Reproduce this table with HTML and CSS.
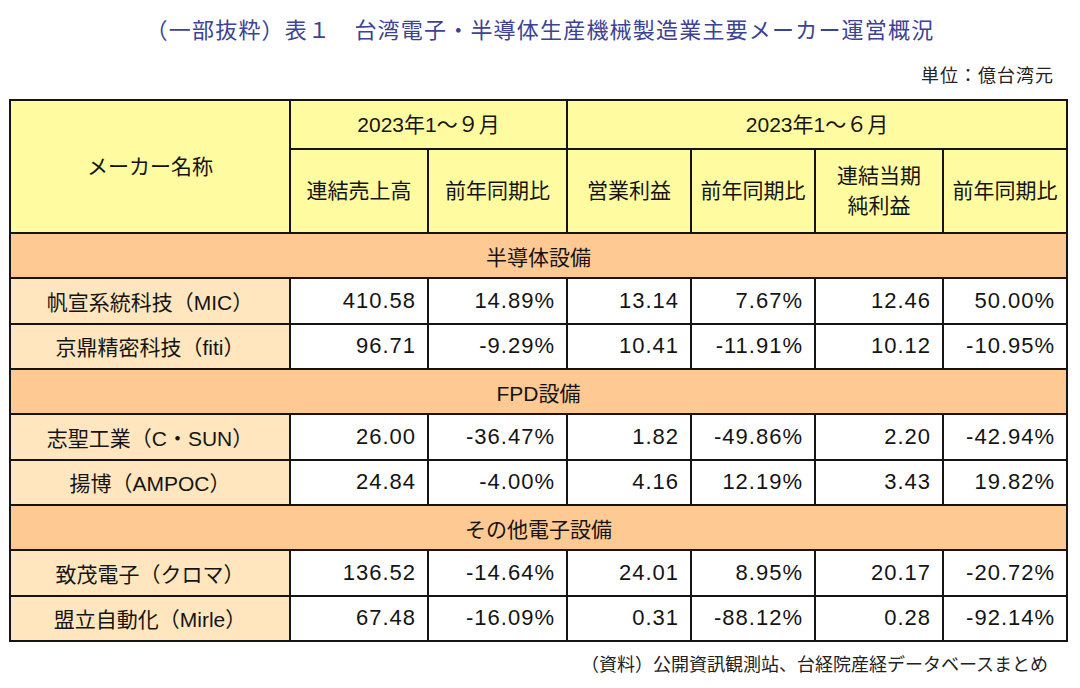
FILE: index.html
```html
<!DOCTYPE html>
<html lang="ja">
<head>
<meta charset="utf-8">
<title>台湾電子・半導体生産機械製造業主要メーカー運営概況</title>
<link rel="stylesheet" href="styles.css">
</head>
<body>
<div class="page">
  <h1 class="title">（一部抜粋）表１　台湾電子・半導体生産機械製造業主要メーカー運営概況</h1>
  <p class="unit">単位：億台湾元</p>
  <table class="report">
    <colgroup>
      <col class="c-name"><col class="c-sales"><col class="c-yoy"><col class="c-op"><col class="c-yoy2"><col class="c-net"><col class="c-yoy3">
    </colgroup>
    <thead>
      <tr class="h-top">
        <th rowspan="2">メーカー名称</th>
        <th colspan="2">2023年1〜９月</th>
        <th colspan="4">2023年1〜６月</th>
      </tr>
      <tr class="h-sub">
        <th>連結売上高</th><th>前年同期比</th><th>営業利益</th><th>前年同期比</th><th>連結当期<br>純利益</th><th>前年同期比</th>
      </tr>
    </thead>
    <tbody>
      <tr class="sec"><td colspan="7">半導体設備</td></tr>
      <tr class="row"><td class="name">帆宣系統科技（MIC）</td><td class="num">410.58</td><td class="num">14.89%</td><td class="num">13.14</td><td class="num">7.67%</td><td class="num">12.46</td><td class="num">50.00%</td></tr>
      <tr class="row"><td class="name">京鼎精密科技（fiti）</td><td class="num">96.71</td><td class="num">-9.29%</td><td class="num">10.41</td><td class="num">-11.91%</td><td class="num">10.12</td><td class="num">-10.95%</td></tr>
      <tr class="sec"><td colspan="7">FPD設備</td></tr>
      <tr class="row"><td class="name">志聖工業（C・SUN）</td><td class="num">26.00</td><td class="num">-36.47%</td><td class="num">1.82</td><td class="num">-49.86%</td><td class="num">2.20</td><td class="num">-42.94%</td></tr>
      <tr class="row"><td class="name">揚博（AMPOC）</td><td class="num">24.84</td><td class="num">-4.00%</td><td class="num">4.16</td><td class="num">12.19%</td><td class="num">3.43</td><td class="num">19.82%</td></tr>
      <tr class="sec"><td colspan="7">その他電子設備</td></tr>
      <tr class="row"><td class="name">致茂電子（クロマ）</td><td class="num">136.52</td><td class="num">-14.64%</td><td class="num">24.01</td><td class="num">8.95%</td><td class="num">20.17</td><td class="num">-20.72%</td></tr>
      <tr class="row"><td class="name">盟立自動化（Mirle）</td><td class="num">67.48</td><td class="num">-16.09%</td><td class="num">0.31</td><td class="num">-88.12%</td><td class="num">0.28</td><td class="num">-92.14%</td></tr>
    </tbody>
  </table>
  <p class="source">（資料）公開資訊観測站、台経院産経データベースまとめ</p>
</div>
</body>
</html>
```

FILE: styles.css
```css
html, body {
  margin: 0;
  padding: 0;
  background: #ffffff;
}

.page {
  width: 1080px;
  font-family: "Liberation Sans", "Noto Sans CJK JP", sans-serif;
  color: #141414;
}

.title {
  margin: 0;
  padding-top: 12px;
  height: 32px;
  line-height: 32px;
  font-size: 22px;
  font-weight: normal;
  letter-spacing: 1.2px;
  text-align: center;
  color: #3d4292;
  font-family: "Noto Sans CJK JP", sans-serif;
}

.unit {
  margin: 18px 0 0 0;
  height: 24px;
  line-height: 24px;
  padding-right: 26px;
  text-align: right;
  font-size: 18px;
  letter-spacing: 1px;
  font-family: "Noto Sans CJK JP", sans-serif;
  color: #222;
}

.report {
  margin: 13px 0 0 9px;
  width: 1057px;
  table-layout: fixed;
  border-collapse: collapse;
  font-size: 21px;
}

.c-name { width: 280px; }
.c-sales { width: 138px; }
.c-yoy { width: 139px; }
.c-op { width: 124px; }
.c-yoy2 { width: 124px; }
.c-net { width: 128px; }
.c-yoy3 { width: 124px; }

.report th,
.report td {
  border: 2px solid #151515;
  padding: 0;
  vertical-align: middle;
}

.report th {
  background: #fffba0;
  font-weight: normal;
  text-align: center;
  line-height: 30px;
}

.h-top { height: 49px; }
.h-sub { height: 84px; }

.sec td {
  background: #ffc993;
  text-align: center;
  height: 43px;
}

.row td {
  height: 43.5px;
}

.name {
  background: #ffe6be;
  text-align: center;
}

.num {
  background: #ffffff;
  text-align: right;
  padding-right: 11px !important;
  font-size: 22px;
  letter-spacing: 1px;
}

.source {
  margin: 9px 0 0 0;
  height: 24px;
  line-height: 24px;
  padding-right: 32px;
  text-align: right;
  font-size: 18px;
  font-family: "Noto Sans CJK JP", sans-serif;
  color: #222;
}
```
